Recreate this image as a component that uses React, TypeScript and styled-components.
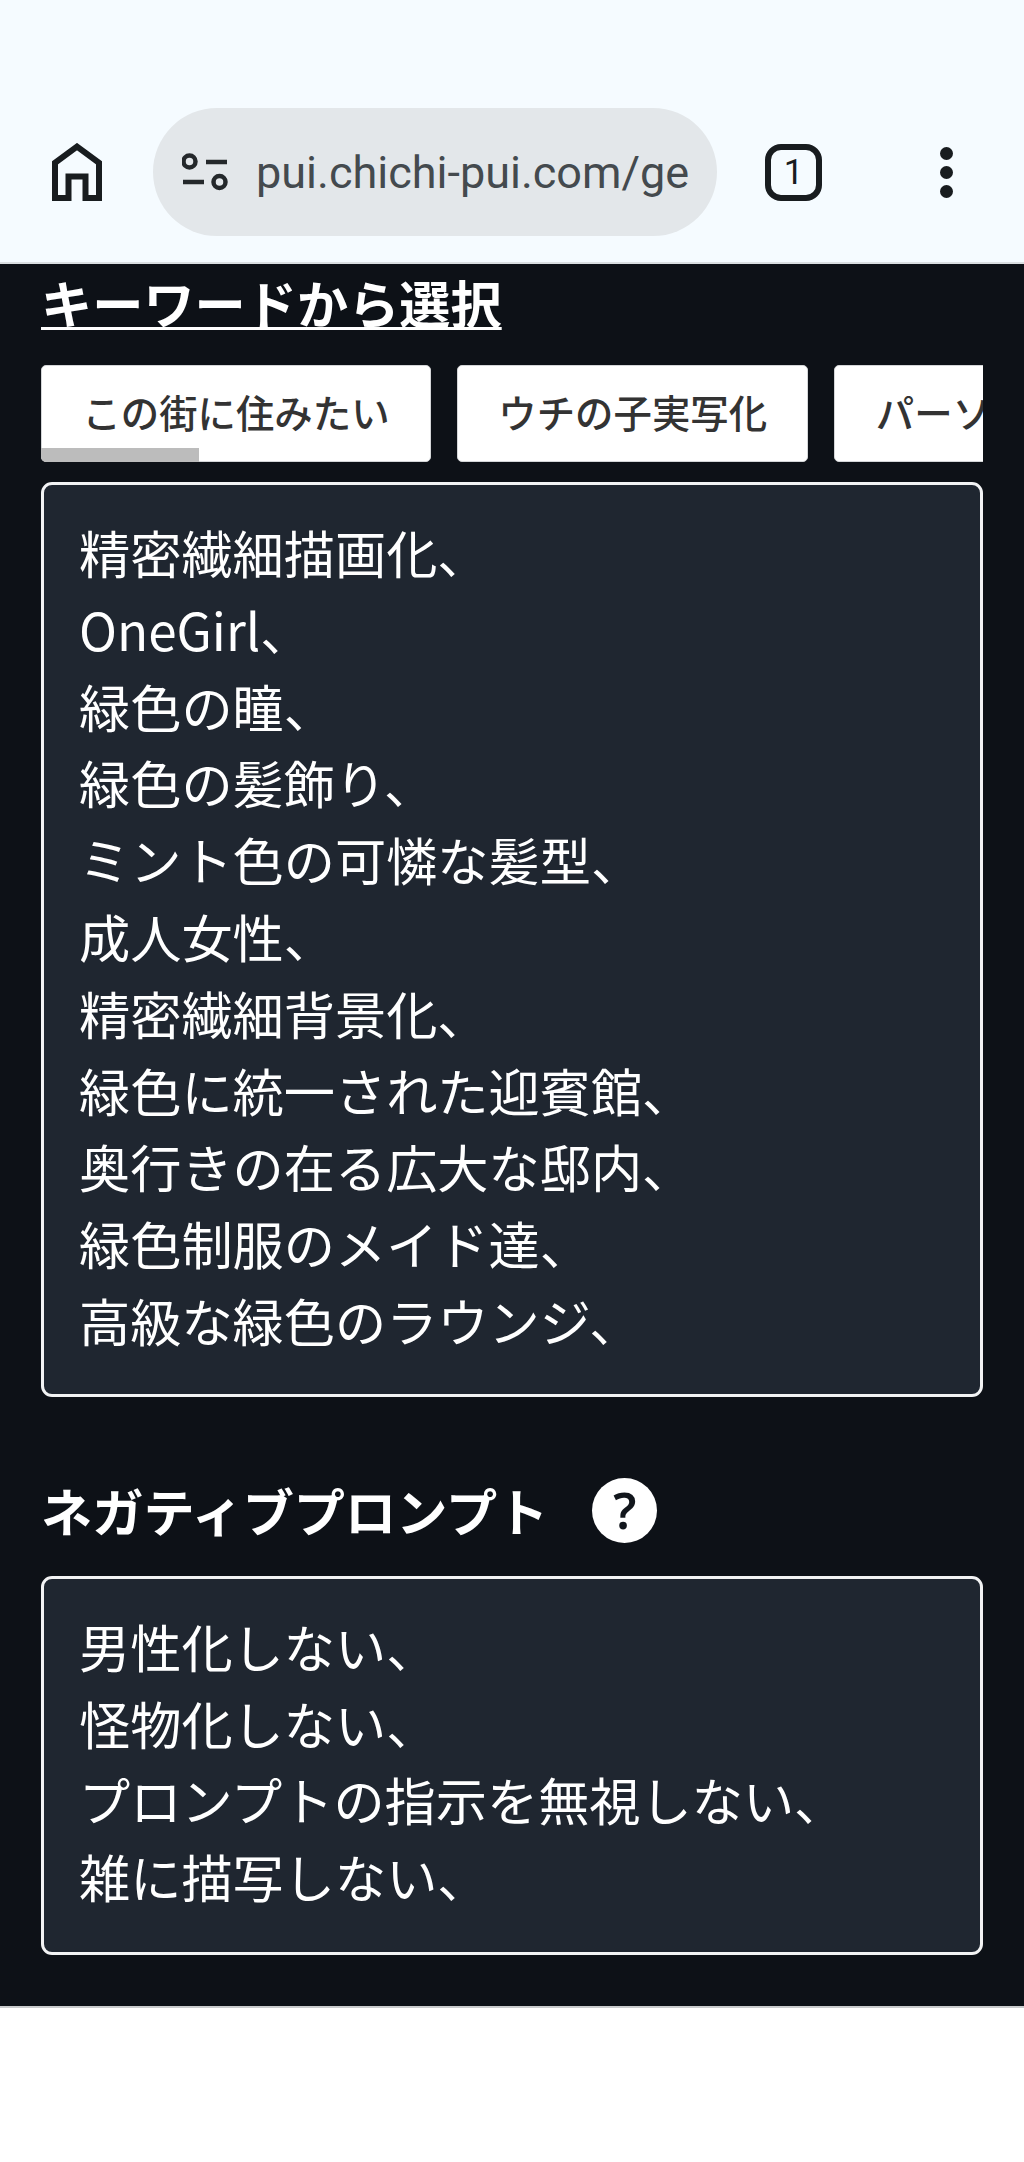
import styled, { createGlobalStyle } from 'styled-components'

const GlobalStyle = createGlobalStyle`
  html, body {
    margin: 0;
    padding: 0;
    background: #ffffff;
  }
  * {
    box-sizing: border-box;
  }
`

const Page = styled.div`
  width: 1024px;
  min-height: 2162px;
  font-family: "Noto Sans CJK JP", "Noto Sans", sans-serif;
  background: #ffffff;
`

const BrowserBar = styled.header`
  height: 264px;
  padding: 82px 0 0 52px;
  display: flex;
  align-items: center;
  background: #f5fbff;
  border-bottom: 2px solid #d9dee1;
`

const AddressPill = styled.div`
  width: 564px;
  height: 128px;
  margin-left: 51px;
  padding-left: 29px;
  display: flex;
  align-items: center;
  gap: 26px;
  border-radius: 64px;
  background: #e3e7ea;
  overflow: hidden;
`

const UrlText = styled.span`
  font-family: Roboto, "Noto Sans", sans-serif;
  font-size: 45px;
  color: #444a4e;
  white-space: nowrap;
`

const TabCount = styled.div`
  width: 57px;
  height: 57px;
  margin-left: 48px;
  display: flex;
  align-items: center;
  justify-content: center;
  border: 6px solid #181c1f;
  border-radius: 16px;
  font-family: Roboto, sans-serif;
  font-size: 35px;
  font-weight: 400;
  color: #181c1f;
`

const MenuDots = styled.div`
  margin-left: 118px;
  display: flex;
  flex-direction: column;
  gap: 6px;
`

const Dot = styled.span`
  width: 13px;
  height: 13px;
  border-radius: 50%;
  background: #181c1f;
`

const Content = styled.main`
  height: 1744px;
  padding: 0 41px;
  background: #0d1117;
  color: #ffffff;
  border-bottom: 2px solid #c9cbcd;
`

const SectionLink = styled.a`
  display: inline-block;
  height: 76px;
  font-size: 51.2px;
  font-weight: 700;
  line-height: 76px;
  color: #ffffff;
  text-decoration: underline;
  text-decoration-thickness: 3px;
  text-underline-offset: 3px;
`

const KeywordRow = styled.div`
  position: relative;
  width: 942px;
  margin-top: 25px;
  display: flex;
  gap: 26px;
  overflow: hidden;
`

const KeywordButton = styled.button`
  flex: none;
  height: 97px;
  padding: 0 40.4px 5px;
  border: 1px solid #d4d6d8;
  border-radius: 5px;
  background: #ffffff;
  color: #333333;
  font-family: inherit;
  font-size: 38.4px;
  font-weight: 500;
  white-space: nowrap;
`

const ScrollThumb = styled.span`
  position: absolute;
  left: 0;
  bottom: 0;
  width: 158px;
  height: 14px;
  background: #bcbcbc;
  border-bottom-left-radius: 5px;
`

const PromptBox = styled.div<{ $gap?: number; $bottom?: number }>`
  margin-top: ${({ $gap }) => $gap ?? 20}px;
  padding: 29px 35px ${({ $bottom }) => $bottom ?? 35}px;
  border: 3.2px solid #f2f3f4;
  border-radius: 11px;
  background: #1f2630;
  font-size: 51.2px;
  line-height: 76.8px;
  color: #ffffff;
`

const PromptLine = styled.div`
  white-space: nowrap;
`

const NegativeHeader = styled.div`
  margin-top: 81px;
  height: 65px;
  display: flex;
  align-items: center;
  gap: 44px;
`

const NegativeTitle = styled.h2`
  margin: 0;
  font-size: 51.2px;
  font-weight: 700;
  line-height: 65px;
`

const HelpBadge = styled.span`
  width: 65px;
  height: 65px;
  display: flex;
  align-items: center;
  justify-content: center;
  border-radius: 50%;
  background: #ffffff;
  color: #12161c;
  font-family: "Noto Sans", sans-serif;
  font-size: 50px;
  font-weight: 600;
  line-height: 65px;
`

const keywords = ['この街に住みたい', 'ウチの子実写化', 'パーソナルカラー']

const positiveLines = [
  '精密繊細描画化、',
  'OneGirl、',
  '緑色の瞳、',
  '緑色の髪飾り、',
  'ミント色の可憐な髪型、',
  '成人女性、',
  '精密繊細背景化、',
  '緑色に統一された迎賓館、',
  '奥行きの在る広大な邸内、',
  '緑色制服のメイド達、',
  '高級な緑色のラウンジ、',
]

const negativeLines = [
  '男性化しない、',
  '怪物化しない、',
  'プロンプトの指示を無視しない、',
  '雑に描写しない、',
]

const HomeIcon = () => (
  <svg width="50" height="58" viewBox="0 0 50 58" fill="none" stroke="#181c1f" strokeWidth="6">
    <path d="M3 55V19.8L25 3.6L47 19.8V55H33.5V33.5H16.5V55Z" />
  </svg>
)

const SiteSettingsIcon = () => (
  <svg width="48" height="40" viewBox="0 0 48 40" fill="none" stroke="#24282b" strokeWidth="4.5">
    <circle cx="7.5" cy="9.5" r="6" />
    <path d="M24 10H45" />
    <path d="M1 30H22" />
    <circle cx="37.5" cy="30" r="6" />
  </svg>
)

const App = () => {
  return (
    <Page>
      <GlobalStyle />
      <BrowserBar>
        <HomeIcon />
        <AddressPill>
          <SiteSettingsIcon />
          <UrlText>pui.chichi-pui.com/ge</UrlText>
        </AddressPill>
        <TabCount>1</TabCount>
        <MenuDots>
          <Dot />
          <Dot />
          <Dot />
        </MenuDots>
      </BrowserBar>
      <Content>
        <SectionLink>キーワードから選択</SectionLink>
        <KeywordRow>
          {keywords.map((word) => (
            <KeywordButton key={word}>{word}</KeywordButton>
          ))}
          <ScrollThumb />
        </KeywordRow>
        <PromptBox>
          {positiveLines.map((line) => (
            <PromptLine key={line}>{line}</PromptLine>
          ))}
        </PromptBox>
        <NegativeHeader>
          <NegativeTitle>ネガティブプロンプト</NegativeTitle>
          <HelpBadge>?</HelpBadge>
        </NegativeHeader>
        <PromptBox $gap={33} $bottom={37}>
          {negativeLines.map((line) => (
            <PromptLine key={line}>{line}</PromptLine>
          ))}
        </PromptBox>
      </Content>
    </Page>
  )
}

export default App
